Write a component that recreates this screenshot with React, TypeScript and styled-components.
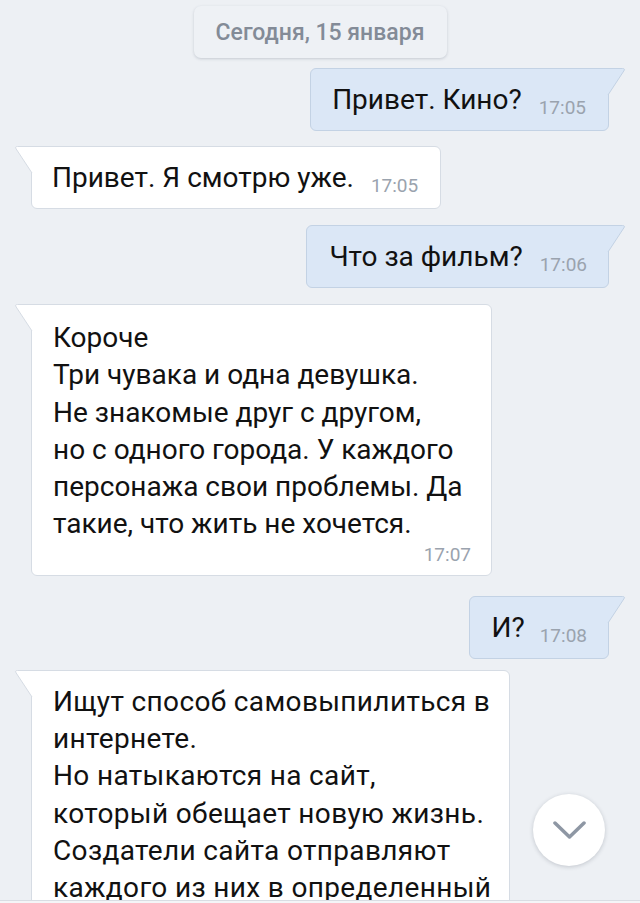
import styled, { createGlobalStyle } from 'styled-components'

const GlobalStyle = createGlobalStyle`
  html, body {
    margin: 0;
    padding: 0;
    background: #edf0f4;
  }
  body {
    font-family: Roboto, "Noto Sans", "Liberation Sans", sans-serif;
    -webkit-font-smoothing: antialiased;
  }
`

const Page = styled.div`
  position: relative;
  width: 640px;
  height: 903px;
  overflow: hidden;
  background: #edf0f4;
  display: flex;
  flex-direction: column;
  padding-top: 6px;
  box-sizing: border-box;
`

const DateRow = styled.div`
  display: flex;
  justify-content: center;
`

const DatePill = styled.div`
  box-sizing: border-box;
  width: 253px;
  height: 52px;
  display: flex;
  align-items: center;
  justify-content: center;
  background: #eef1f5;
  border-radius: 7px;
  box-shadow: 0 1px 3px rgba(60, 70, 90, 0.22);
  color: #838b97;
  font-size: 23px;
  font-weight: 500;
`

const Row = styled.div<{ out?: boolean; top: number }>`
  display: flex;
  justify-content: ${p => (p.out ? 'flex-end' : 'flex-start')};
  padding: ${p => (p.out ? '0 31px 0 0' : '0 0 0 31px')};
  margin-top: ${p => p.top}px;
`

const Bubble = styled.div<{ out?: boolean }>`
  position: relative;
  box-sizing: border-box;
  background: ${p => (p.out ? '#dbe7f6' : '#ffffff')};
  border: 1px solid ${p => (p.out ? '#c3d2e4' : '#d6dce4')};
  border-radius: ${p => (p.out ? '6px 0 6px 6px' : '0 6px 6px 6px')};
  color: #111;
`

const Inline = styled.div<{ left: number; right: number }>`
  height: 61px;
  display: flex;
  align-items: center;
  padding: 0 ${p => p.right}px 0 ${p => p.left}px;
  font-size: 28px;
  white-space: nowrap;
`

const Time = styled.span<{ gap?: number }>`
  color: #9aa3ae;
  font-size: 19px;
  margin-left: ${p => p.gap ?? 17}px;
  position: relative;
  top: 8px;
`

const Block = styled.div<{ width: number; top: number }>`
  width: ${p => p.width}px;
  box-sizing: border-box;
  padding: ${p => p.top}px 20px 10px 21px;
  font-size: 28px;
  line-height: 37.3px;
  white-space: nowrap;
`

const Narrow = styled.div`
  letter-spacing: 0.35px;
`

const BlockTime = styled.div`
  margin-top: 2px;
  text-align: right;
  color: #9aa3ae;
  font-size: 19px;
  line-height: 20px;
`

const TailWrap = styled.svg<{ out?: boolean }>`
  position: absolute;
  top: -1px;
  ${p => (p.out ? 'right: -18px;' : 'left: -18px;')}
  width: 19px;
  height: 28px;
  overflow: visible;
`

const ScrollButton = styled.div`
  position: absolute;
  left: 533px;
  top: 794px;
  width: 72px;
  height: 72px;
  border-radius: 50%;
  background: #fff;
  box-shadow: 0 1px 4px rgba(40, 50, 70, 0.22);
  display: flex;
  align-items: center;
  justify-content: center;
`

const BottomEdge = styled.div`
  position: absolute;
  left: 0;
  right: 0;
  bottom: 0;
  height: 2px;
  background: #f4f5f7;
  border-top: 1px solid #d9dde3;
`

const Tail = ({ out }: { out?: boolean }) => {
  const fill = out ? '#dbe7f6' : '#ffffff'
  const stroke = out ? '#c3d2e4' : '#d6dce4'
  if (out) {
    return (
      <TailWrap out viewBox="0 0 19 28">
        <path d="M0 0.5 H15.5 Q18.5 0.5 16.8 3 L1 27 H0 Z" fill={fill} />
        <path d="M0 0.5 H15.5 Q18.5 0.5 16.8 3 L1 27" fill="none" stroke={stroke} strokeWidth="1" />
      </TailWrap>
    )
  }
  return (
    <TailWrap viewBox="0 0 19 28">
      <path d="M19 0.5 H3.5 Q0.5 0.5 2.2 3 L18 27 H19 Z" fill={fill} />
      <path d="M19 0.5 H3.5 Q0.5 0.5 2.2 3 L18 27" fill="none" stroke={stroke} strokeWidth="1" />
    </TailWrap>
  )
}

export default function App() {
  return (
    <>
      <GlobalStyle />
      <Page>
        <DateRow>
          <DatePill>Сегодня, 15 января</DatePill>
        </DateRow>

        <Row out top={10}>
          <Bubble out>
            <Tail out />
            <Inline left={21} right={22}>
              Привет. Кино?<Time>17:05</Time>
            </Inline>
          </Bubble>
        </Row>

        <Row top={15}>
          <Bubble>
            <Tail />
            <Inline left={20} right={22}>
              Привет. Я смотрю уже.<Time>17:05</Time>
            </Inline>
          </Bubble>
        </Row>

        <Row out top={16}>
          <Bubble out>
            <Tail out />
            <Inline left={22} right={21}>
              Что за фильм?<Time>17:06</Time>
            </Inline>
          </Bubble>
        </Row>

        <Row top={16}>
          <Bubble>
            <Tail />
            <Block width={459} top={14}>
              Короче
              <br />
              Три чувака и одна девушка.
              <br />
              Не знакомые друг с другом,
              <br />
              но с одного города. У каждого
              <br />
              персонажа свои проблемы. Да
              <br />
              такие, что жить не хочется.
              <BlockTime>17:07</BlockTime>
            </Block>
          </Bubble>
        </Row>

        <Row out top={20}>
          <Bubble out>
            <Tail out />
            <Inline left={21} right={21}>
              И?<Time gap={15}>17:08</Time>
            </Inline>
          </Bubble>
        </Row>

        <Row top={11}>
          <Bubble>
            <Tail />
            <Block width={477} top={12}>
              <Narrow>
                Ищут способ самовыпилиться в
                <br />
                интернете.
                <br />
                Но натыкаются на сайт,
                <br />
                который обещает новую жизнь.
                <br />
                Создатели сайта отправляют
                <br />
                каждого из них в определенный
              </Narrow>
            </Block>
          </Bubble>
        </Row>

        <ScrollButton>
          <svg width="33" height="19" viewBox="0 0 33 19">
            <path d="M2 2 L16.5 16 L31 2" fill="none" stroke="#8e97a4" strokeWidth="3.5" strokeLinecap="round" strokeLinejoin="round" />
          </svg>
        </ScrollButton>
        <BottomEdge />
      </Page>
    </>
  )
}
